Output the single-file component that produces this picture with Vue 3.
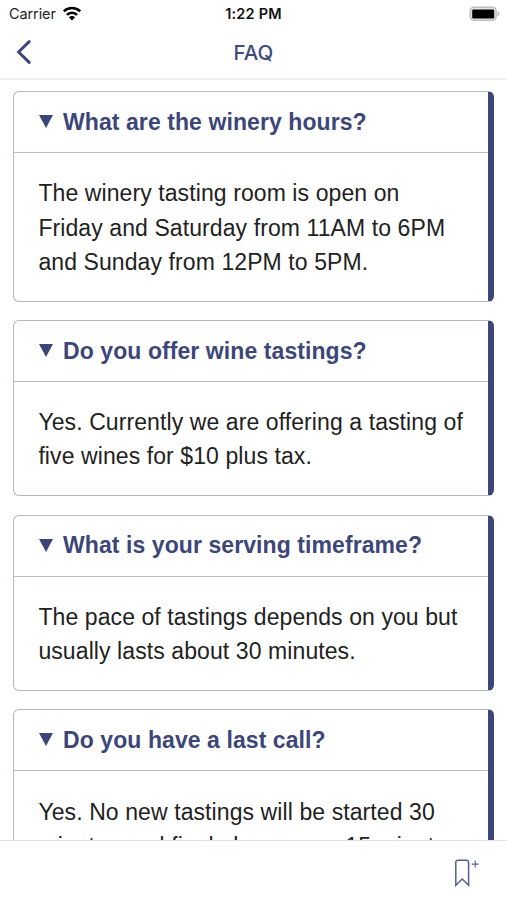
<script setup>
const questions = [
  { title: 'What are the winery hours?', lines: ['The winery tasting room is open on', 'Friday and Saturday from 11AM to 6PM', 'and Sunday from 12PM to 5PM.'] },
  { title: 'Do you offer wine tastings?', lines: ['Yes. Currently we are offering a tasting of', 'five wines for $10 plus tax.'] },
  { title: 'What is your serving timeframe?', lines: ['The pace of tastings depends on you but', 'usually lasts about 30 minutes.'] },
  { title: 'Do you have a last call?', lines: ['Yes. No new tastings will be started 30', 'minutes and final glasses are 15 minutes'] },
]
</script>

<template>
  <div class="screen">
    <div class="status">
      <div class="carrier">
        <span>Carrier</span>
        <svg class="wifi" viewBox="0 0 20 15" width="20" height="15">
          <g fill="none" stroke="#000" stroke-width="2.6">
            <path d="M1.8 5.4a11.6 11.6 0 0 1 16.4 0" />
            <path d="M4.9 8.8a7.2 7.2 0 0 1 10.2 0" />
          </g>
          <path d="M10 14.4 6.9 11.2a4.4 4.4 0 0 1 6.2 0z" />
        </svg>
      </div>
      <div class="time">1:22 PM</div>
      <div class="power">
        <svg viewBox="0 0 32 16" width="32" height="16">
          <rect x="1.2" y="1.2" width="26" height="13.2" rx="3.8" fill="#e4e4e4" stroke="#bdbdbd" stroke-width="1.4" />
          <rect x="3.2" y="3.4" width="22" height="9" rx="1.2" />
          <path d="M28.6 5.3c2.6 1 2.6 4 0 5z" fill="#b9b9b9" />
        </svg>
      </div>
    </div>
    <header class="nav">
      <svg class="back" viewBox="0 0 16 26" width="16" height="26">
        <path d="M13.2 2.6 2.6 13l10.6 10.4" fill="none" stroke="#3d457a" stroke-width="2.9" stroke-linecap="round" stroke-linejoin="miter" />
      </svg>
      <h1>FAQ</h1>
    </header>
    <main>
      <article v-for="q in questions" :key="q.title" class="card">
        <h2>
          <svg viewBox="0 0 14 13" width="14" height="13"><path d="M0 0h14L7 13z" fill="#3c4678" /></svg>
          <span>{{ q.title }}</span>
        </h2>
        <div class="answer">
          <div v-for="line in q.lines" :key="line">{{ line }}</div>
        </div>
      </article>
    </main>
    <footer>
      <svg viewBox="0 0 28 30" width="28" height="30">
        <path d="M2.8 27.2V4.4q0-2.2 2.2-2.2h8.4q2.2 0 2.2 2.2v22.8l-6.4-6.2z" fill="none" stroke="#565d8b" stroke-width="1.5" />
        <path d="M22.2 2.6v7M18.7 6.1h7" stroke="#565d8b" stroke-width="1.1" />
      </svg>
    </footer>
  </div>
</template>

<style>
body { margin: 0; background: #fff; }
</style>

<style scoped>
.screen {
  box-sizing: border-box;
  width: 507px;
  height: 900px;
  overflow: hidden;
  display: flex;
  flex-direction: column;
  background: #fff;
  color: #222;
  font-family: "Liberation Sans", Arial, sans-serif;
}
.status {
  flex: none;
  height: 28px;
  display: grid;
  grid-template-columns: 1fr auto 1fr;
  align-items: center;
  font-family: Inter, sans-serif;
  font-size: 14.5px;
  padding-bottom: 1px;
  margin-bottom: -1px;
  box-sizing: border-box;
}
.carrier { display: flex; align-items: center; gap: 6px; padding-left: 9px; letter-spacing: -0.1px; }
.wifi { display: block; margin-top: -1px; }
.time { font-weight: 600; color: #111; letter-spacing: 0.2px; }
.power { display: flex; justify-content: flex-end; padding: 0 6px 0 0; }
.nav {
  box-sizing: border-box;
  flex: none;
  height: 53px;
  display: grid;
  grid-template-columns: 1fr auto 1fr;
  align-items: center;
  border-bottom: 2px solid #efeff0;
  padding-bottom: 1px;
}
.back { margin-left: 16px; }
h1 {
  margin: 0;
  font-family: Inter, sans-serif;
  font-size: 20.5px;
  font-weight: 500;
  color: #414a7f;
}
main {
  flex: none;
  box-sizing: border-box;
  height: 760px;
  overflow: hidden;
  padding: 11.2px 13px 0;
  display: flex;
  flex-direction: column;
  gap: 18.3px;
}
.card {
  flex: none;
  border: 1px solid #b3b7cc;
  border-right: 6px solid #3c4678;
  border-radius: 6px;
}
h2 {
  box-sizing: border-box;
  margin: 0;
  height: 61px;
  display: flex;
  align-items: center;
  gap: 10px;
  padding: 0 0 1px 25px;
  border-bottom: 1px solid #b8bbce;
  font-size: 23px;
  line-height: 34px;
  color: #3c4678;
  letter-spacing: 0.08px;
  white-space: nowrap;
}
.answer {
  padding: 23.2px 0 21.8px 24.4px;
  font-size: 23px;
  line-height: 34.2px;
  letter-spacing: 0.09px;
  white-space: nowrap;
}
footer {
  box-sizing: border-box;
  flex: none;
  height: 60px;
  border-top: 1px solid #dfe0e8;
  display: flex;
  justify-content: flex-end;
  align-items: flex-start;
  padding: 17px 26px 0 0;
}
</style>
